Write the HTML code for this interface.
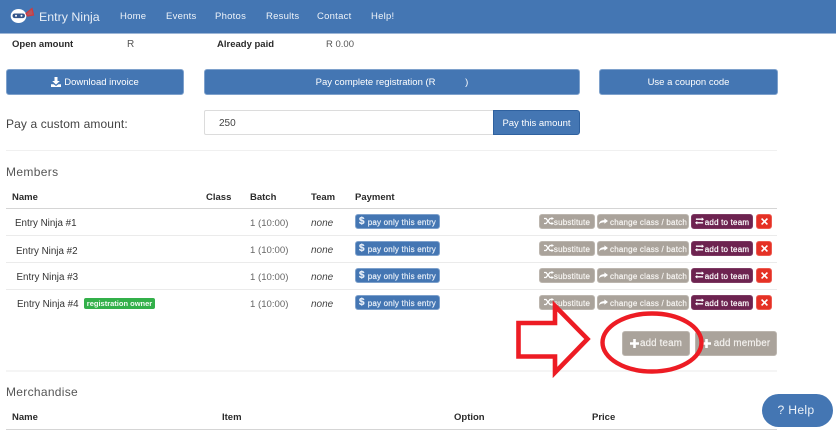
<!DOCTYPE html>
<html><head><meta charset="utf-8">
<style>
html,body{margin:0;padding:0;background:#fff}
body{width:836px;height:430px;position:relative;overflow:hidden;font-family:"Liberation Sans","DejaVu Sans",sans-serif;color:#333}
.t{position:absolute;white-space:nowrap;line-height:14px;height:14px}
.b{font-weight:bold;color:#2b2b2b;font-size:9.5px}
.n{font-size:9.8px;color:#333}
.d{font-size:9.6px;color:#666}
.o{font-size:10px;font-style:italic;color:#444}
.btn{position:absolute;box-sizing:border-box;border-radius:3px;color:#fff;white-space:nowrap;background:#4476b3;border:1px solid #7ea1cc;display:flex;align-items:center;justify-content:center}
.big{height:26px;font-size:9.5px;padding-top:1px}
.s{height:15px;font-size:8px;letter-spacing:.2px;-webkit-text-stroke:.2px currentColor;padding-top:1px}
.s svg{flex:none}
.g{background:#aaa39b;border-color:#bcb6af;color:#f7f5f2}
.p{background:#6d2350;border-color:#7d3a62}
.r{background:#e53125;border-color:#ec5a50;padding-top:0}
.line{position:absolute;left:6px;width:771px}
.nav{position:absolute;top:10px;line-height:14px;font-size:9.5px;color:#eef3f9;letter-spacing:.25px;white-space:nowrap}
.lg{height:25px;font-size:9.8px;letter-spacing:.15px;color:#f3f1ee;-webkit-text-stroke:.2px currentColor}
</style></head><body>
<div style="position:absolute;left:0;top:0;width:836px;height:33px;background:#4476b3;border-bottom:1px solid #9db6d6"></div>
<svg style="position:absolute;left:8px;top:5px" width="30" height="22" viewBox="0 0 30 22">
<ellipse cx="10.500" cy="11" rx="7.800" ry="7" fill="#fff"/>
<rect x="4.500" y="8.500" width="12.500" height="4.600" rx="2.200" fill="#34558a"/>
<circle cx="8" cy="10.800" r="1" fill="#fff"/><circle cx="13.500" cy="10.800" r="1" fill="#fff"/>
<path d="M18 8.500l6-5 1.500 6.500-6 1z" fill="#b5565f" stroke="#cf3a3e" stroke-width="1.200"/>
</svg>
<div class="t" style="left:39px;top:9.500px;font-size:12.400px;color:#e6edf6">Entry Ninja</div>
<div class="nav" style="left:120px">Home</div>
<div class="nav" style="left:166px">Events</div>
<div class="nav" style="left:215px">Photos</div>
<div class="nav" style="left:266px">Results</div>
<div class="nav" style="left:317px">Contact</div>
<div class="nav" style="left:371px">Help!</div>

<div class="t b" style="left:12px;top:38px">Open amount</div>
<div class="t" style="left:127px;top:38px;font-size:10px;color:#555">R</div>
<div class="t b" style="left:217px;top:38px">Already paid</div>
<div class="t" style="left:326px;top:38px;font-size:9.500px;color:#555">R 0.00</div>

<div class="btn big" style="left:6px;top:69px;width:178px"><svg width="10" height="10" viewBox="0 0 10 10" style="margin-right:3px;margin-top:-2px"><path d="M3.500 0h3v4h2.300L5 7.600 1.200 4h2.300zM0 7.200h2.600L5 9l2.400-1.800H10V10H0z" fill="#fff"/></svg>Download invoice</div>
<div class="btn big" style="left:204px;top:69px;width:376px">Pay complete registration (R&nbsp;<span style="display:inline-block;width:27px"></span>)</div>
<div class="btn big" style="left:599px;top:69px;width:179px">Use a coupon code</div>

<div class="t" style="left:6px;top:116.500px;font-size:12px;color:#444;letter-spacing:.12px">Pay a custom amount:</div>
<div style="position:absolute;left:204px;top:110px;width:290px;height:25px;box-sizing:border-box;border:1px solid #dcdcdc;border-radius:2px 0 0 2px;background:#fff"></div>
<div class="t" style="left:219px;top:117px;font-size:10px;color:#444">250</div>
<div class="btn" style="left:493px;top:110px;width:87px;height:25px;padding-top:1px;font-size:9.500px;border-color:#2f619f;border-radius:0 3px 3px 0">Pay this amount</div>

<div class="line" style="top:150px;height:1px;background:#f0f0f0"></div>
<div class="t" style="left:6px;top:164.500px;font-size:12px;color:#555;letter-spacing:.35px">Members</div>

<div class="t b" style="left:12px;top:191px">Name</div>
<div class="t b" style="left:206px;top:191px">Class</div>
<div class="t b" style="left:250px;top:191px">Batch</div>
<div class="t b" style="left:311px;top:191px">Team</div>
<div class="t b" style="left:355px;top:191px">Payment</div>
<div class="line" style="top:208px;height:1px;background:#d5d5d5"></div>
<div class="line" style="top:235px;height:1px;background:#ebebeb"></div>
<div class="line" style="top:262px;height:1px;background:#ebebeb"></div>
<div class="line" style="top:289px;height:1px;background:#ebebeb"></div>

<div class="t n" style="left:15px;top:216.500px">Entry Ninja #1</div>
<div class="t n" style="left:16px;top:245px">Entry Ninja #2</div>
<div class="t n" style="left:16.500px;top:271px">Entry Ninja #3</div>
<div class="t n" style="left:17px;top:298px">Entry Ninja #4</div>
<div style="position:absolute;left:84px;top:298px;width:71px;height:11px;line-height:11px;background:#33b04a;border-radius:2px;color:#f2fbf3;font-size:7.500px;font-weight:bold;text-align:center;white-space:nowrap">registration owner</div>

<div class="t d" style="left:250px;top:216.500px">1 (10:00)</div>
<div class="t d" style="left:250px;top:243.500px">1 (10:00)</div>
<div class="t d" style="left:250px;top:270.500px">1 (10:00)</div>
<div class="t d" style="left:250px;top:297.500px">1 (10:00)</div>
<div class="t o" style="left:311px;top:216.500px">none</div>
<div class="t o" style="left:311px;top:243.500px">none</div>
<div class="t o" style="left:311px;top:270.500px">none</div>
<div class="t o" style="left:311px;top:297.500px">none</div>

<div class="btn s" style="left:355px;top:214px;width:85px;color:#e8eff8"><b style="font-size:10px;margin-right:3px;margin-top:-2px">$</b>pay only this entry</div>
<div class="btn s" style="left:355px;top:241px;width:85px;color:#e8eff8"><b style="font-size:10px;margin-right:3px;margin-top:-2px">$</b>pay only this entry</div>
<div class="btn s" style="left:355px;top:268px;width:85px;color:#e8eff8"><b style="font-size:10px;margin-right:3px;margin-top:-2px">$</b>pay only this entry</div>
<div class="btn s" style="left:355px;top:295px;width:85px;color:#e8eff8"><b style="font-size:10px;margin-right:3px;margin-top:-2px">$</b>pay only this entry</div>

<!-- row 1 -->
<div class="btn s g" style="left:539px;top:214px;width:56px"><svg width="10" height="8" viewBox="0 0 10 8" style="margin-top:-2px"><path d="M0 1.500h2l4 5h2M0 6.500h2l4-5h2" fill="none" stroke="#fff" stroke-width="1.300"/><path d="M7.500 0l2.500 1.500-2.500 1.500zM7.500 5l2.500 1.500L7.500 8z" fill="#fff"/></svg>substitute</div>
<div class="btn s g" style="left:597px;top:214px;width:92px"><svg width="9" height="7" viewBox="0 0 10 7" style="margin-right:2px;margin-top:-2px"><path d="M10 3L6 0v2C2 2 0 4 0 7c1-2 3-2.500 6-2.500V6z" fill="#fff"/></svg>change class / batch</div>
<div class="btn s p" style="left:691px;top:214px;width:62px"><svg width="9" height="8" viewBox="0 0 10 8" style="margin-right:1px;margin-top:-2px"><path d="M7.500 0L10 2 7.500 4V2.800H1V1.200h6.500zM2.500 4L0 6l2.500 2V6.800H9V5.200H2.500z" fill="#fff"/></svg>add to team</div>
<div class="btn s r" style="left:756px;top:214px;width:16px"><svg width="7" height="7" viewBox="0 0 9 9"><path d="M1.500 0L4.500 3 7.500 0 9 1.500 6 4.500 9 7.500 7.500 9 4.500 6 1.500 9 0 7.500 3 4.500 0 1.500z" fill="#fff"/></svg></div>
<!-- row 2 -->
<div class="btn s g" style="left:539px;top:241px;width:56px"><svg width="10" height="8" viewBox="0 0 10 8" style="margin-top:-2px"><path d="M0 1.500h2l4 5h2M0 6.500h2l4-5h2" fill="none" stroke="#fff" stroke-width="1.300"/><path d="M7.500 0l2.500 1.500-2.500 1.500zM7.500 5l2.500 1.500L7.500 8z" fill="#fff"/></svg>substitute</div>
<div class="btn s g" style="left:597px;top:241px;width:92px"><svg width="9" height="7" viewBox="0 0 10 7" style="margin-right:2px;margin-top:-2px"><path d="M10 3L6 0v2C2 2 0 4 0 7c1-2 3-2.500 6-2.500V6z" fill="#fff"/></svg>change class / batch</div>
<div class="btn s p" style="left:691px;top:241px;width:62px"><svg width="9" height="8" viewBox="0 0 10 8" style="margin-right:1px;margin-top:-2px"><path d="M7.500 0L10 2 7.500 4V2.800H1V1.200h6.500zM2.500 4L0 6l2.500 2V6.800H9V5.200H2.500z" fill="#fff"/></svg>add to team</div>
<div class="btn s r" style="left:756px;top:241px;width:16px"><svg width="7" height="7" viewBox="0 0 9 9"><path d="M1.500 0L4.500 3 7.500 0 9 1.500 6 4.500 9 7.500 7.500 9 4.500 6 1.500 9 0 7.500 3 4.500 0 1.500z" fill="#fff"/></svg></div>
<!-- row 3 -->
<div class="btn s g" style="left:539px;top:268px;width:56px"><svg width="10" height="8" viewBox="0 0 10 8" style="margin-top:-2px"><path d="M0 1.500h2l4 5h2M0 6.500h2l4-5h2" fill="none" stroke="#fff" stroke-width="1.300"/><path d="M7.500 0l2.500 1.500-2.500 1.500zM7.500 5l2.500 1.500L7.500 8z" fill="#fff"/></svg>substitute</div>
<div class="btn s g" style="left:597px;top:268px;width:92px"><svg width="9" height="7" viewBox="0 0 10 7" style="margin-right:2px;margin-top:-2px"><path d="M10 3L6 0v2C2 2 0 4 0 7c1-2 3-2.500 6-2.500V6z" fill="#fff"/></svg>change class / batch</div>
<div class="btn s p" style="left:691px;top:268px;width:62px"><svg width="9" height="8" viewBox="0 0 10 8" style="margin-right:1px;margin-top:-2px"><path d="M7.500 0L10 2 7.500 4V2.800H1V1.200h6.500zM2.500 4L0 6l2.500 2V6.800H9V5.200H2.500z" fill="#fff"/></svg>add to team</div>
<div class="btn s r" style="left:756px;top:268px;width:16px"><svg width="7" height="7" viewBox="0 0 9 9"><path d="M1.500 0L4.500 3 7.500 0 9 1.500 6 4.500 9 7.500 7.500 9 4.500 6 1.500 9 0 7.500 3 4.500 0 1.500z" fill="#fff"/></svg></div>
<!-- row 4 -->
<div class="btn s g" style="left:539px;top:295px;width:56px"><svg width="10" height="8" viewBox="0 0 10 8" style="margin-top:-2px"><path d="M0 1.500h2l4 5h2M0 6.500h2l4-5h2" fill="none" stroke="#fff" stroke-width="1.300"/><path d="M7.500 0l2.500 1.500-2.500 1.500zM7.500 5l2.500 1.500L7.500 8z" fill="#fff"/></svg>substitute</div>
<div class="btn s g" style="left:597px;top:295px;width:92px"><svg width="9" height="7" viewBox="0 0 10 7" style="margin-right:2px;margin-top:-2px"><path d="M10 3L6 0v2C2 2 0 4 0 7c1-2 3-2.500 6-2.500V6z" fill="#fff"/></svg>change class / batch</div>
<div class="btn s p" style="left:691px;top:295px;width:62px"><svg width="9" height="8" viewBox="0 0 10 8" style="margin-right:1px;margin-top:-2px"><path d="M7.500 0L10 2 7.500 4V2.800H1V1.200h6.500zM2.500 4L0 6l2.500 2V6.800H9V5.200H2.500z" fill="#fff"/></svg>add to team</div>
<div class="btn s r" style="left:756px;top:295px;width:16px"><svg width="7" height="7" viewBox="0 0 9 9"><path d="M1.500 0L4.500 3 7.500 0 9 1.500 6 4.500 9 7.500 7.500 9 4.500 6 1.500 9 0 7.500 3 4.500 0 1.500z" fill="#fff"/></svg></div>

<div class="btn g lg" style="left:622px;top:331px;width:68px"><svg width="9" height="9" viewBox="0 0 9 9" style="margin-right:1px"><path d="M3.200 0h2.600v3.200H9v2.600H5.800V9H3.200V5.800H0V3.200h3.200z" fill="#fff"/></svg>add team</div>
<div class="btn g lg" style="left:695px;top:331px;width:82px"><svg width="9" height="9" viewBox="0 0 9 9" style="margin-right:3px"><path d="M3.200 0h2.600v3.200H9v2.600H5.800V9H3.200V5.800H0V3.200h3.200z" fill="#fff"/></svg>add member</div>

<div class="line" style="top:370px;height:2px;background:#f5f5f5"></div>
<div class="t" style="left:6px;top:385px;font-size:12px;color:#555;letter-spacing:.3px">Merchandise</div>
<div class="t b" style="left:12px;top:411px">Name</div>
<div class="t b" style="left:222px;top:411px">Item</div>
<div class="t b" style="left:454px;top:411px">Option</div>
<div class="t b" style="left:592px;top:411px">Price</div>
<div class="line" style="top:428.500px;height:1.500px;background:#d5d5d5"></div>

<div style="position:absolute;left:762px;top:394px;width:71px;height:33px;line-height:33px;border-radius:17px;background:#4476b3;color:#e9f0f8;font-size:12.200px;text-indent:-3px;text-align:center;letter-spacing:.3px">? Help</div>

<svg style="position:absolute;left:0;top:0" width="836" height="430" viewBox="0 0 836 430">
<polygon points="518.500,323 555,323 555,306 587.500,339 555,372.500 555,356.500 518.500,356.500" fill="none" stroke="#ed1c24" stroke-width="4.600" stroke-linejoin="miter"/>
<ellipse cx="652" cy="342.500" rx="49.500" ry="29" fill="none" stroke="#ed1c24" stroke-width="4.400"/>
</svg>
</body></html>
